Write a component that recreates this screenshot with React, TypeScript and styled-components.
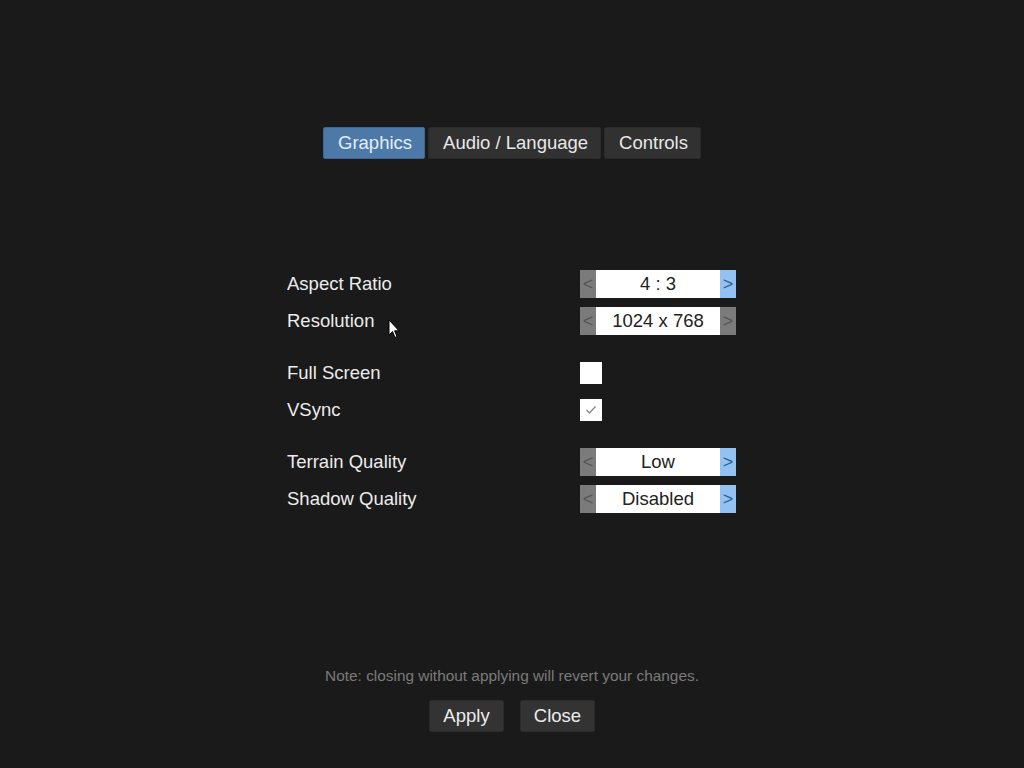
import React from 'react';
import styled, { createGlobalStyle } from 'styled-components';

const GlobalStyle = createGlobalStyle`
  html, body {
    margin: 0;
    padding: 0;
    background: #1a1a1a;
  }
  body {
    font-family: "Liberation Sans", Arial, sans-serif;
  }
`;

const Page = styled.div`
  position: relative;
  width: 1024px;
  height: 768px;
  display: flex;
  flex-direction: column;
  align-items: center;
  background: #1a1a1a;
  color: #ececec;
  overflow: hidden;
`;

const Tabs = styled.div`
  display: flex;
  gap: 3px;
  margin-top: 127px;
`;

const Tab = styled.div<{ $active?: boolean }>`
  height: 32px;
  padding: 0 12px 0 14px;
  display: flex;
  align-items: center;
  font-size: 18.5px;
  border-radius: 2px;
  background: ${(p) => (p.$active ? '#4c79a7' : '#313131')};
  color: ${(p) => (p.$active ? '#e3eefa' : '#e8e8e8')};
  border: 1px solid ${(p) => (p.$active ? '#3f6790' : '#2a2a2a')};
  box-sizing: border-box;
`;

const Settings = styled.div`
  margin-top: 111px;
  width: 450px;
  display: flex;
  flex-direction: column;
`;

const Group = styled.div`
  display: flex;
  flex-direction: column;
  gap: 9px;
  & + & {
    margin-top: 24px;
  }
`;

const Row = styled.div`
  display: grid;
  grid-template-columns: 293px 156px;
  align-items: center;
  height: 28px;
`;

const Label = styled.div`
  font-size: 18.5px;
  color: #ececec;
`;

const Selector = styled.div`
  display: flex;
  height: 28px;
  width: 156px;
`;

const Arrow = styled.div<{ $enabled?: boolean }>`
  width: 16px;
  display: flex;
  align-items: center;
  justify-content: center;
  font-size: 18px;
  background: ${(p) => (p.$enabled ? '#93c1f1' : '#7b7b7b')};
  color: ${(p) => (p.$enabled ? '#2c5d94' : '#555555')};
`;

const Value = styled.div`
  flex: 1;
  display: flex;
  align-items: center;
  justify-content: center;
  background: #ffffff;
  color: #222;
  font-size: 18.5px;
`;

const Check = styled.div`
  width: 22px;
  height: 22px;
  background: #ffffff;
  display: flex;
  align-items: center;
  justify-content: center;
`;

const Footer = styled.div`
  margin-top: auto;
  margin-bottom: 36px;
  display: flex;
  flex-direction: column;
  align-items: center;
`;

const Note = styled.div`
  font-size: 15.4px;
  color: #7a7a7a;
  line-height: 18px;
  margin-bottom: 15px;
`;

const Buttons = styled.div`
  display: flex;
  gap: 16px;
`;

const Button = styled.div`
  height: 32px;
  width: 75px;
  display: flex;
  align-items: center;
  justify-content: center;
  font-size: 18.5px;
  color: #ececec;
  background: #333333;
  border: 1px solid #2a2a2a;
  border-radius: 2px;
  box-sizing: border-box;
`;

const Cursor = styled.svg`
  position: absolute;
  left: 388px;
  top: 319px;
`;

const Select = ({ value, left, right }: { value: string; left?: boolean; right?: boolean }) => (
  <Selector>
    <Arrow $enabled={left}>&lt;</Arrow>
    <Value>{value}</Value>
    <Arrow $enabled={right}>&gt;</Arrow>
  </Selector>
);

const App = () => (
  <Page>
    <GlobalStyle />
    <Tabs>
      <Tab $active>Graphics</Tab>
      <Tab>Audio / Language</Tab>
      <Tab>Controls</Tab>
    </Tabs>
    <Settings>
      <Group>
        <Row>
          <Label>Aspect Ratio</Label>
          <Select value="4 : 3" right />
        </Row>
        <Row>
          <Label>Resolution</Label>
          <Select value="1024 x 768" />
        </Row>
      </Group>
      <Group>
        <Row>
          <Label>Full Screen</Label>
          <Check />
        </Row>
        <Row>
          <Label>VSync</Label>
          <Check>
            <svg width="12" height="10" viewBox="0 0 12 10">
              <polyline points="1.5,5 4.5,8 10.5,1.5" fill="none" stroke="#8a8a8a" strokeWidth="1.4" />
            </svg>
          </Check>
        </Row>
      </Group>
      <Group>
        <Row>
          <Label>Terrain Quality</Label>
          <Select value="Low" right />
        </Row>
        <Row>
          <Label>Shadow Quality</Label>
          <Select value="Disabled" right />
        </Row>
      </Group>
    </Settings>
    <Footer>
      <Note>Note: closing without applying will revert your changes.</Note>
      <Buttons>
        <Button>Apply</Button>
        <Button>Close</Button>
      </Buttons>
    </Footer>
    <Cursor width="12" height="20" viewBox="0 0 12 20">
      <path d="M1 1 L1 16 L4.5 12.5 L7 18.5 L9 17.6 L6.6 11.8 L11 11.8 Z" fill="#ffffff" stroke="#000" strokeWidth="1" />
    </Cursor>
  </Page>
);

export default App;
